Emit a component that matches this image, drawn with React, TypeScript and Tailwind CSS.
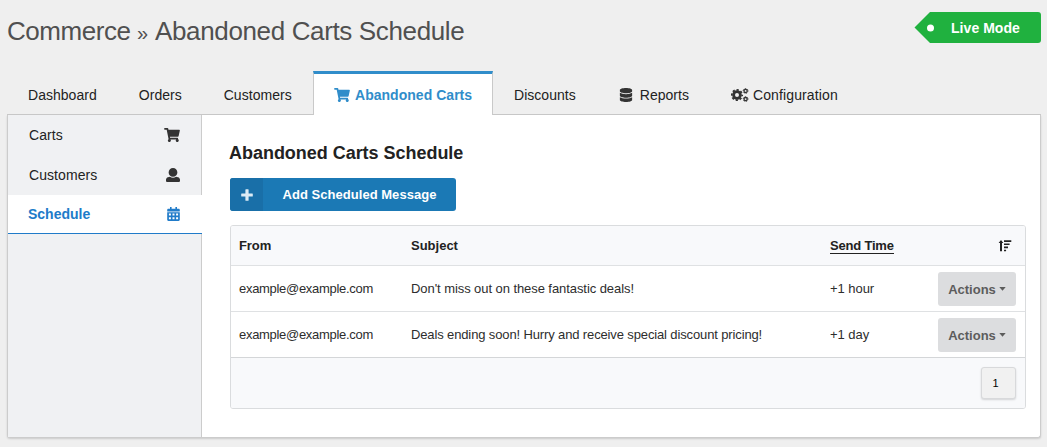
import type { ReactNode } from "react";
import { FaShoppingCart, FaDatabase } from "react-icons/fa";

function Tab({ children }: { children: ReactNode }) {
  return <div className="flex h-[43px] items-center px-[21px] pt-[5px] tracking-[0.03px]">{children}</div>;
}

function UserIcon() {
  return (
    <svg width="14" height="14" viewBox="0 0 512 512" fill="currentColor">
      <path d="M256 0c88.366 0 160 71.634 160 160s-71.634 160-160 160S96 248.366 96 160 167.634 0 256 0zm183.283 333.821l-71.313-17.828c-74.923 53.89-165.738 41.864-223.94 0l-71.313 17.828C29.981 344.505 0 382.903 0 426.955V464c0 26.51 21.49 48 48 48h416c26.51 0 48-21.49 48-48v-37.045c0-44.052-29.981-82.45-72.717-93.134z" />
    </svg>
  );
}

function CogsIcon() {
  return (
    <svg width="18" height="14" viewBox="0 0 18 14" fill="none" stroke="currentColor" className="mr-1 text-[#333]">
      <circle cx="6" cy="7" r="3.4" strokeWidth="2.8" />
      <circle cx="6" cy="7" r="5.2" strokeWidth="1.7" strokeDasharray="2.2 1.884" strokeDashoffset="1.1" />
      <circle cx="14.6" cy="2.9" r="1.6" strokeWidth="1.3" />
      <circle cx="14.6" cy="2.9" r="2.4" strokeWidth="0.9" strokeDasharray="1.4 1.113" strokeDashoffset="0.7" />
      <circle cx="14.6" cy="11.1" r="1.6" strokeWidth="1.3" />
      <circle cx="14.6" cy="11.1" r="2.4" strokeWidth="0.9" strokeDasharray="1.4 1.113" strokeDashoffset="0.7" />
    </svg>
  );
}

function CalendarIcon() {
  return (
    <svg width="13" height="14" viewBox="0 0 13 14" fill="currentColor">
      <path d="M3 0h1.6v1.8h3.8V0H10v1.8h1.6c.7 0 1.2.5 1.2 1.2v1.4H.2V3c0-.7.5-1.2 1.2-1.2H3z" />
      <path
        fillRule="evenodd"
        d="M.2 5.2h12.6v7.5c0 .7-.5 1.2-1.2 1.2H1.4c-.7 0-1.2-.5-1.2-1.2zM1.9 6.6v2h2v-2zM5.5 6.6v2h2v-2zM9.1 6.6v2h2v-2zM1.9 10.2v2h2v-2zM5.5 10.2v2h2v-2zM9.1 10.2v2h2v-2z"
      />
    </svg>
  );
}

function PlusIcon() {
  return (
    <svg width="12" height="12" viewBox="0 0 12 12" fill="#dcebf5">
      <path d="M4.9.2h2.2q.5 0 .5.5v3.7h3.7q.5 0 .5.5v2.2q0 .5-.5.5H7.6v3.7q0 .5-.5.5H4.9q-.5 0-.5-.5V7.6H.7q-.5 0-.5-.5V4.9q0-.5.5-.5h3.7V.7q0-.5.5-.5z" />
    </svg>
  );
}

function SortIcon() {
  return (
    <svg width="14" height="12" viewBox="0 0 14 12" className="-ml-[2px] block" fill="#222">
      <path d="M3 0 5.4 2.9H4V11.3H2V2.9H.6Z" />
      <path d="M6 .3h7.3v1.7H6zM6 3.5h5.6v1.6H6zM6 6.6h4v1.6H6zM6 9.7h2.1v1.6H6z" />
    </svg>
  );
}

function SideItem({ label, icon }: { label: string; icon: ReactNode }) {
  return (
    <div className="flex h-10 items-center justify-between border-r border-[#ccc] pl-[21px] pr-[21px]">
      <span className="tracking-[0.07px]">{label}</span>
      <span className="text-[#333]">{icon}</span>
    </div>
  );
}

function Row({ from, subject, time, last }: { from: string; subject: string; time: string; last?: boolean }) {
  return (
    <div
      className={`grid h-[46px] grid-cols-[172px_419px_108px_78px] items-center border-b pl-2 text-[13px] text-[#2d2d2d] ${
        last ? "border-[#d4d6d8]" : "border-[#dfe1e3]"
      }`}
    >
      <span className="pt-px tracking-[-0.3px]">{from}</span>
      <span className={last ? "pt-px tracking-[-0.13px]" : "pt-px tracking-[-0.07px]"}>{subject}</span>
      <span className="pt-px tracking-[-0.05px]">{time}</span>
      <button className="flex h-[34px] items-center justify-center rounded-[3px] bg-[#dcdddf] pt-0.5 font-bold text-[#5c5c5c]">
        Actions
        <svg width="7" height="4" viewBox="0 0 7 4" className="mb-px ml-[3px]" fill="currentColor">
          <path d="M.3 0h6.4L3.5 3.8Z" />
        </svg>
      </button>
    </div>
  );
}

export default function App() {
  return (
    <div className="h-[447px] w-[1047px] overflow-hidden bg-[#efefef] pl-[7px] pr-[6px] font-['Liberation_Sans',Arial,sans-serif] text-[14px] leading-5 text-[#222]">
      <header className="flex h-[71px] items-start justify-between">
        <h1 className="flex pt-[15px] text-[26px] leading-8 whitespace-nowrap text-[#505050]">
          <span className="w-[130px] tracking-[-0.45px]">Commerce</span>
          <span className="w-[18px] pt-0.5 text-[20px]">»</span>
          <span className="tracking-[-0.36px]">Abandoned Carts Schedule</span>
        </h1>
        <div className="mt-3 flex h-[31px] w-[127px] items-center">
          <svg width="16" height="31" viewBox="0 0 16 31" className="shrink-0">
            <path d="M16 0 .5 15.5 16 31Z" fill="#20b13f" />
          </svg>
          <div className="flex h-[31px] flex-1 items-center rounded-r-[3px] bg-[#20b13f]">
            <svg width="8" height="8" viewBox="0 0 8 8" className="-ml-[3px] shrink-0">
              <circle cx="3.5" cy="4" r="3.5" fill="#fff" />
            </svg>
            <span className="ml-4 pt-px font-bold tracking-[0.05px] whitespace-nowrap text-white">Live Mode</span>
          </div>
        </div>
      </header>

      <nav className="flex h-11 items-start border-b border-[#c9c9c9] whitespace-nowrap">
        <div className="flex w-[306px]">
          <Tab>Dashboard</Tab>
          <Tab>Orders</Tab>
          <Tab>Customers</Tab>
        </div>
        <div className="flex h-11 w-[180px] items-center border-x border-t-[3px] border-x-[#c9c9c9] border-t-[#308dca] bg-white pt-px pl-5 font-bold text-[#308dca]">
          <FaShoppingCart size={16} className="mr-[5px] h-[14px]" />
          <span className="tracking-[0.03px]">Abandoned Carts</span>
        </div>
        <Tab>Discounts</Tab>
        <Tab>
          <FaDatabase size={14} className="mr-[7px] ml-px text-[#333]" />
          Reports
        </Tab>
        <Tab>
          <CogsIcon />
          <span className="tracking-[0.12px]">Configuration</span>
        </Tab>
      </nav>

      <main className="flex h-[323px] rounded-b-[3px] border-x border-b border-[#ccc] bg-white shadow-[0_1px_2px_rgba(0,0,0,0.15)]">
        <aside className="flex w-[194px] shrink-0 flex-col bg-[#f0f1f3]">
          <SideItem label="Carts" icon={<FaShoppingCart size={16} className="h-[14px]" />} />
          <SideItem label="Customers" icon={<UserIcon />} />
          <div className="flex h-[39px] items-center justify-between border-b border-[#207bc9] bg-white pl-5 pr-[22px] font-bold text-[#207bc9]">
            Schedule
            <CalendarIcon />
          </div>
          <div className="flex-1 border-r border-[#ccc]" />
        </aside>

        <section className="flex-1 pt-[26px] pr-[14px] pl-7">
          <h2 className="-ml-px text-[18px] leading-6 font-bold tracking-[-0.03px]">Abandoned Carts Schedule</h2>
          <button className="mt-[13px] flex h-[33px] w-[226px] overflow-hidden rounded-[3px] bg-[#1b79b5] text-[13px] font-bold text-white">
            <span className="flex h-full w-[33px] items-center justify-center bg-[#196fa8] pt-px">
              <PlusIcon />
            </span>
            <span className="flex h-full flex-1 items-center justify-center tracking-[0.03px]">
              Add Scheduled Message
            </span>
          </button>

          <div className="mt-[14px] h-[184px] w-[796px] overflow-hidden rounded-[3px] border border-[#dadcde]">
            <div className="grid h-10 grid-cols-[172px_419px_170px_14px] items-center border-b border-[#dfe1e3] bg-[#f8f9fb] pl-2 text-[13px] font-bold">
              <span className="tracking-[-0.1px]">From</span>
              <span>Subject</span>
              <span>
                <span className="inline-block border-b border-[#222] leading-[15px] tracking-[-0.2px]">Send Time</span>
              </span>
              <SortIcon />
            </div>
            <Row from="example@example.com" subject="Don't miss out on these fantastic deals!" time="+1 hour" />
            <Row
              from="example@example.com"
              subject="Deals ending soon! Hurry and receive special discount pricing!"
              time="+1 day"
              last
            />
            <div className="flex h-[50px] items-center justify-end bg-[#f8f9fb] pr-[9px]">
              <button className="h-8 w-[35px] rounded-[3px] border border-[#d8d9db] bg-[#f1f1f1] pr-[6px] text-[11px] text-black shadow-[0_1px_2px_rgba(0,0,0,0.15)]">
                1
              </button>
            </div>
          </div>
        </section>
      </main>
    </div>
  );
}
